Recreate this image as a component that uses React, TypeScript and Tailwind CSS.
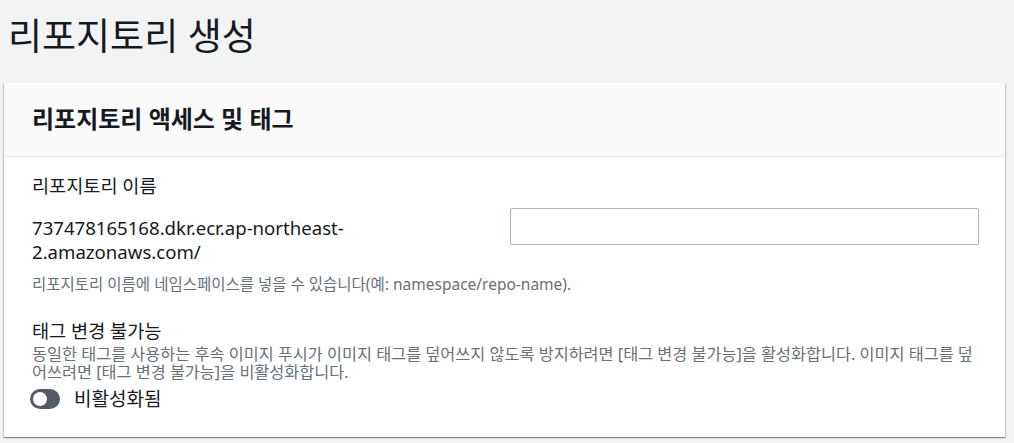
import { useState } from "react";

const font = { fontFamily: '"Noto Sans", "Noto Sans CJK KR", sans-serif' };

function Toggle({ on, onChange }: { on: boolean; onChange: (v: boolean) => void }) {
  return (
    <button
      type="button"
      onClick={() => onChange(!on)}
      className={`relative -ml-[2px] h-[20px] w-[30px] shrink-0 rounded-full ${on ? "bg-[#0073bb]" : "bg-[#545b64]"}`}
    >
      <span
        className={`absolute top-[3px] h-[14px] w-[14px] rounded-full bg-white ${on ? "left-[13px]" : "left-[3px]"}`}
      />
    </button>
  );
}

export default function App() {
  const [immutable, setImmutable] = useState(false);
  const [name, setName] = useState("");

  return (
    <div className="min-h-[443px] bg-[#f2f3f3] text-[#16191f]" style={font}>
      <h1 className="pl-[8px] pt-[12px] text-[37px] font-normal leading-[48px]">리포지토리 생성</h1>

      <section className="mx-[4px] mt-[23px] w-[1001px] bg-white shadow-[0_1px_1px_0_rgba(0,28,36,0.3),1px_1px_1px_0_rgba(0,28,36,0.15),-1px_1px_1px_0_rgba(0,28,36,0.15)]">
        <div className="flex h-[74px] items-center border-b border-[#eaeded] bg-[#fafafa] px-[28px] pb-[2px]">
          <h2 className="text-[24px] font-bold leading-[30px]">리포지토리 액세스 및 태그</h2>
        </div>

        <div className="px-[28px] pb-[26px] pt-[17px]">
          <label className="block text-[18.6px] leading-[24px]">리포지토리 이름</label>
          <div className="mt-[10px] grid grid-cols-[478px_469px] items-start">
            <div className="mt-[8px] w-[400px] text-[18.6px] leading-[24px]">
              737478165168.dkr.ecr.ap-northeast-2.amazonaws.com/
            </div>
            <input
              value={name}
              onChange={(e) => setName(e.target.value)}
              className="h-[37px] rounded-[2px] border border-[#aab7b8] bg-white px-[10px] text-[16px] outline-none"
            />
          </div>
          <p className="mt-[10px] text-[15.5px] leading-[21px] text-[#687078]">
            리포지토리 이름에 네임스페이스를 넣을 수 있습니다(예: namespace/repo-name).
          </p>

          <div className="mt-[24px]">
            <div className="text-[18.6px] leading-[24px]">태그 변경 불가능</div>
            <p className="mt-[2px] text-[16.3px] leading-[18px] text-[#687078]">
              동일한 태그를 사용하는 후속 이미지 푸시가 이미지 태그를 덮어쓰지 않도록 방지하려면 [태그 변경 불가능]을 활성화합니다. 이미지 태그를 덮어쓰려면 [태그 변경 불가능]을 비활성화합니다.
            </p>
            <div className="mt-[6px] flex items-center gap-[14px]">
              <Toggle on={immutable} onChange={setImmutable} />
              <span className="text-[19px] leading-[24px]">{immutable ? "활성화됨" : "비활성화됨"}</span>
            </div>
          </div>
        </div>
      </section>
    </div>
  );
}
